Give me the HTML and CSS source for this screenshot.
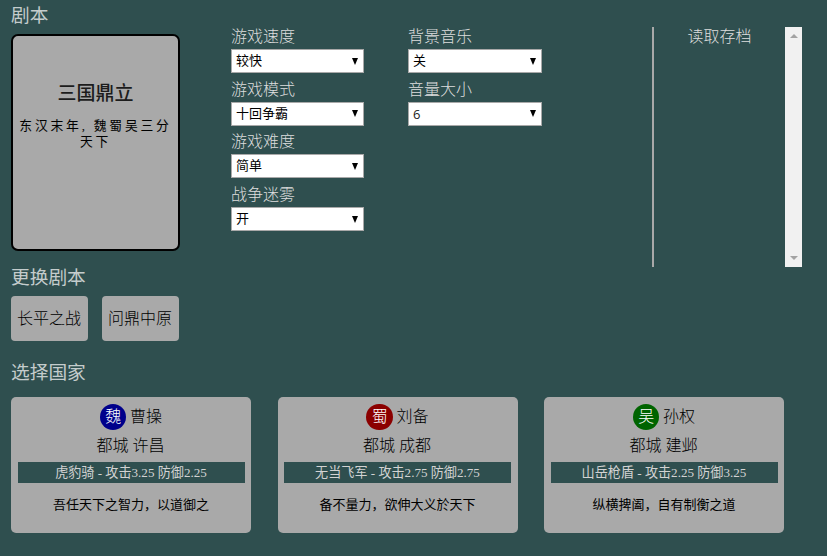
FILE: index.html
```html
<!DOCTYPE html>
<html lang="zh-CN">
<head>
<meta charset="utf-8">
<title>三国鼎立</title>
<link rel="stylesheet" href="styles.css">
</head>
<body>
<main class="page">
  <div class="top">
    <section class="scenario">
      <h3 class="heading">剧本</h3>
      <div class="scenario-card">
        <h3 class="scenario-title">三国鼎立</h3>
        <p class="scenario-text">东汉末年, 魏蜀吴三分天下</p>
      </div>
    </section>
    <section class="options">
      <div class="field"><span class="label">游戏速度</span><div class="select"><span>较快</span><i class="arrow"></i></div></div>
      <div class="field"><span class="label">游戏模式</span><div class="select"><span>十回争霸</span><i class="arrow"></i></div></div>
      <div class="field"><span class="label">游戏难度</span><div class="select"><span>简单</span><i class="arrow"></i></div></div>
      <div class="field"><span class="label">战争迷雾</span><div class="select"><span>开</span><i class="arrow"></i></div></div>
    </section>
    <section class="options sound">
      <div class="field"><span class="label">背景音乐</span><div class="select"><span>关</span><i class="arrow"></i></div></div>
      <div class="field"><span class="label">音量大小</span><div class="select"><span class="digit">6</span><i class="arrow"></i></div></div>
    </section>
    <section class="saves">
      <div class="saves-title">读取存档</div>
      <div class="scrollbar"><i class="up"></i><i class="down"></i></div>
    </section>
  </div>
  <h3 class="heading change">更换剧本</h3>
  <div class="buttons">
    <div class="button">长平之战</div>
    <div class="button">问鼎中原</div>
  </div>
  <h3 class="heading choose">选择国家</h3>
  <div class="nations">
    <article class="nation">
      <div class="leader"><span class="badge wei">魏</span> <span>曹操</span></div>
      <div class="capital">都城 许昌</div>
      <div class="unit">虎豹骑 - 攻击3.25 防御2.25</div>
      <p class="motto">吾任天下之智力，以道御之</p>
    </article>
    <article class="nation">
      <div class="leader"><span class="badge shu">蜀</span> <span>刘备</span></div>
      <div class="capital">都城 成都</div>
      <div class="unit">无当飞军 - 攻击2.75 防御2.75</div>
      <p class="motto">备不量力，欲伸大义於天下</p>
    </article>
    <article class="nation">
      <div class="leader"><span class="badge wu">吴</span> <span>孙权</span></div>
      <div class="capital">都城 建邺</div>
      <div class="unit">山岳枪盾 - 攻击2.25 防御3.25</div>
      <p class="motto">纵横捭阖，自有制衡之道</p>
    </article>
  </div>
</main>
</body>
</html>
```
FILE: styles.css
```css
* { box-sizing: border-box; }
body {
  margin: 0;
  background: #2f4f4f;
  color: #d3d3d3;
  font: 300 16px/20px "Liberation Serif", "Noto Sans CJK SC", serif;
  overflow: hidden;
}
h3, p { margin: 0; }
.page { padding-left: 11px; }
.top { display: flex; height: 267px; }
.heading { font-size: 18.72px; font-weight: 400; line-height: 24px; color: #c4cccc; }
.scenario { width: 169px; padding-top: 4px; }
.scenario-card {
  height: 217px;
  margin-top: 6px;
  padding-top: 46px;
  border: 2px solid #000;
  border-radius: 7px;
  background: #a9a9a9;
  color: #000;
  text-align: center;
}
.scenario-title { font-size: 19px; font-weight: 500; line-height: 24px; color: #1c1c1c; }
.scenario-text { margin-top: 12px; padding: 0 3px; font-size: 12.8px; font-weight: 400; line-height: 16px; letter-spacing: 2.8px; }
.options { width: 133px; margin-left: 51px; padding-top: 25px; }
.sound { width: 134px; margin-left: 44px; }
.field { height: 52.7px; }
.label { display: block; height: 24px; line-height: 23px; color: #dedede; }
.select {
  display: flex;
  align-items: center;
  justify-content: space-between;
  height: 24px;
  padding: 0 5px 0 4px;
  border: 1px solid #a9a9a9;
  background: #fff;
  color: #000;
  font-size: 13px;
  font-weight: 400;
}
.digit { font-family: "Open Sans", sans-serif; color: #222; }
.arrow { border: 3.5px solid transparent; border-top: 7px solid #000; border-bottom: 0; }
.saves {
  display: flex;
  width: 150px;
  height: 240px;
  margin: 27px 0 0 110px;
  border-left: 2px solid #a9a9a9;
}
.saves-title { flex: 1; line-height: 19px; text-align: center; color: #dedede; }
.scrollbar {
  display: flex;
  flex-direction: column;
  justify-content: space-between;
  align-items: center;
  width: 17px;
  padding: 7px 0;
  background: #f1f1f1;
}
.up, .down { border: 4px solid transparent; }
.up { border-bottom-color: #a3a3a3; border-top: 0; }
.down { border-top-color: #a3a3a3; border-bottom: 0; }
.change { height: 29px; line-height: 22px; }
.buttons { display: flex; gap: 14px; }
.button {
  width: 77px;
  height: 45px;
  padding-right: 1px;
  border-radius: 4px;
  background: #a9a9a9;
  color: #000;
  text-align: center;
  line-height: 45px;
}
.choose { height: 56px; padding-top: 20px; }
.nations { display: flex; gap: 26.5px; }
.nation {
  flex: none;
  width: 240px;
  height: 136px;
  padding: 6px 6.5px;
  border-radius: 5px;
  background: #a9a9a9;
  color: #000;
  text-align: center;
}
.leader { display: flex; align-items: center; justify-content: center; gap: 3.5px; height: 28px; }
.badge { width: 26.5px; height: 26.5px; border-radius: 50%; color: #fff; line-height: 25px; }
.wei { background: #00008b; }
.shu { background: #8b0000; }
.wu { background: #006400; }
.capital { height: 31px; padding-right: 1px; line-height: 29px; }
.unit { height: 21px; background: #2f4f4f; color: #d3d3d3; font-size: 13.1px; font-weight: 400; line-height: 21px; }
.motto { padding-top: 12px; font-size: 13px; font-weight: 400; line-height: 20px; }
```
